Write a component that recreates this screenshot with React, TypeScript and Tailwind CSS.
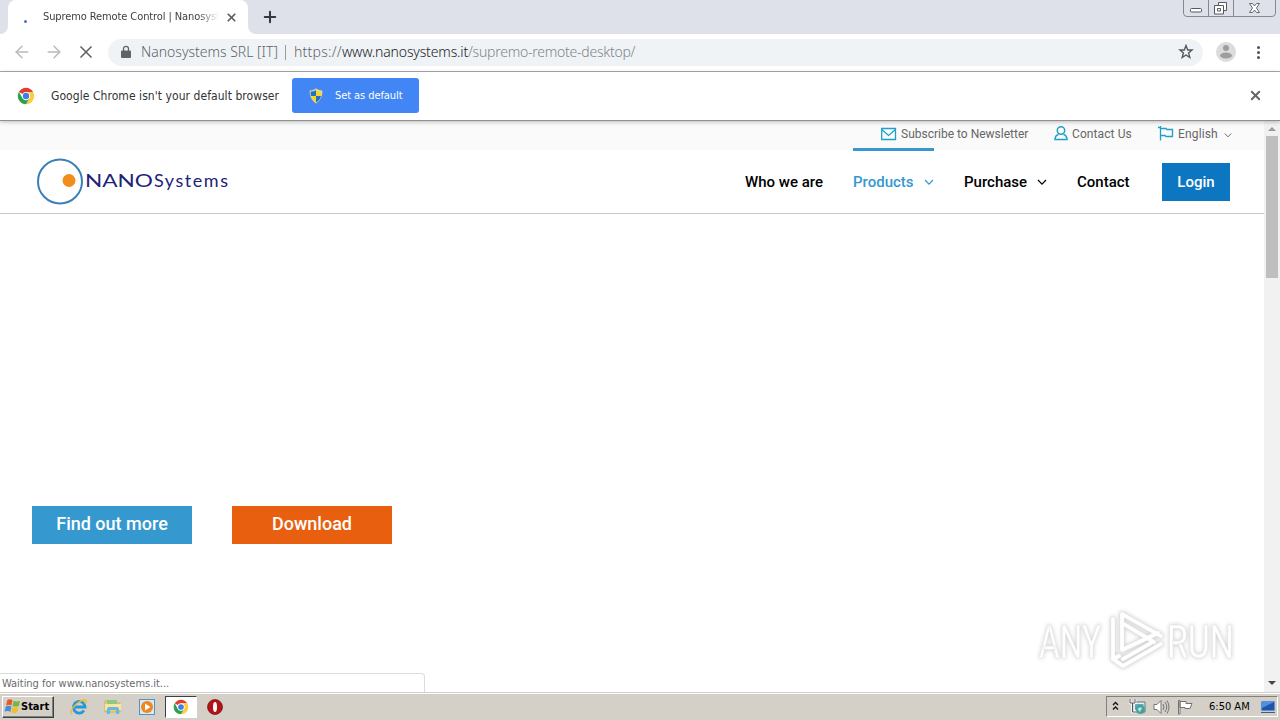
import { ArrowLeft, ArrowRight, Plus, X } from "lucide-react"

const uiFont = "font-['DejaVu_Sans_Condensed','DejaVu_Sans',sans-serif]"

function ChromeLogo({ size }: { size: number }) {
    return (
        <svg width={size} height={size} viewBox="0 0 48 48" className="shrink-0">
            <circle cx="24" cy="24" r="22" fill="#fff" />
            <path d="M24 24 5 13A22 22 0 0 1 43 13H24Z" fill="#e33b2e" />
            <path d="M24 13H43A22 22 0 0 1 24 46L33.5 29.5Z" fill="#fccd3f" />
            <path d="M5 13A22 22 0 0 0 24 46L33.5 29.5 24 35 14.5 29.5Z" fill="#2ba24c" />
            <circle cx="24" cy="24" r="11" fill="#fff" />
            <circle cx="24" cy="24" r="8.5" fill="#3f7de8" />
        </svg>
    )
}

function WindowButtons() {
    return (
        <svg width="94" height="18" viewBox="0 0 94 18" fill="none" className="ml-auto mr-[3px]">
            <path d="M.5 0V13Q.5 16.500 4 16.500H89Q92.500 16.500 92.500 13V0M25.500 0V16M50.500 0V16" stroke="#85888f" />
            <rect x="7.500" y="8.500" width="11" height="3.500" rx="1" fill="#fff" stroke="#55585e" />
            <path d="M35.500 2.500H43.500V10.500H35.500Z" fill="#fff" stroke="#55585e" />
            <path d="M31.500 5.500H40.500V14H31.500Z" fill="#fff" stroke="#55585e" />
            <path d="M34.500 8.500H37.500V11H34.500Z" stroke="#55585e" />
            <path d="M66.500 3.500H69.500L71.500 6 73.500 3.500H76.500L73.500 8 76.500 12.500H73.500L71.500 10 69.500 12.500H66.500L69.500 8Z" fill="#fff" stroke="#666970" />
        </svg>
    )
}

function TabStrip() {
    return (
        <div className="flex h-[34px] bg-[#dee1e9]">
            <div className="h-full w-2 bg-white">
                <div className="h-full rounded-br-lg bg-[#dee1e9]" />
            </div>
            <div className="flex w-60 items-center rounded-t-lg bg-white">
                <div className="ml-4 mt-2 size-[3px] rounded-full bg-[#4a72c8]" />
                <div className="ml-4 w-[176px] overflow-hidden whitespace-nowrap pt-px text-[11px] tracking-[-0.1px] text-[#3c4043] [mask-image:linear-gradient(to_right,black_88%,transparent)]">
                    Supremo Remote Control | Nanosyst
                </div>
                <X size={13} strokeWidth={3.200} className="ml-1.5 text-[#5b5e63]" />
            </div>
            <div className="h-full w-2 bg-white">
                <div className="h-full rounded-bl-lg bg-[#dee1e9]" />
            </div>
            <Plus size={18} strokeWidth={2.700} className="ml-[5px] mt-2 text-[#35383d]" />
            <WindowButtons />
        </div>
    )
}

function Toolbar() {
    return (
        <div className="flex h-[38px] items-center border-b border-[#a9abae] bg-white pb-px">
            <ArrowLeft size={20} strokeWidth={1.800} className="ml-3 text-[#b9bbbe]" />
            <ArrowRight size={20} strokeWidth={1.800} className="ml-3 text-[#b9bbbe]" />
            <X size={20} strokeWidth={2} className="ml-3 text-[#5f6368]" />
            <div className="ml-3 flex h-[27px] w-[1095px] items-center rounded-full bg-[#f0f3f6] font-['Noto_Sans',sans-serif] text-sm font-light text-[#5f6368]">
                <svg width="10" height="14" viewBox="0 0 10 14" className="ml-[13px]">
                    <path d="M2.500 6V3.800a2.500 2.500 0 0 1 5 0V6" fill="none" stroke="#5f6368" strokeWidth="1.300" />
                    <rect x="0" y="5.500" width="10" height="7.500" rx="1" fill="#5f6368" />
                </svg>
                <span className="ml-[10px] w-[137px] whitespace-nowrap">Nanosystems SRL [IT]</span>
                <span className="ml-[7px] h-[15px] w-px bg-[#999ca0]" />
                <span className="ml-2 whitespace-nowrap tracking-[0.25px]">
                    https://<span className="tracking-[-0.16px] text-[#202124]">www.nanosystems.it</span><span className="tracking-[-0.24px] text-[#80848a]">/supremo-remote-desktop/</span>
                </span>
                <svg width="16" height="16" viewBox="0 0 16 16" className="ml-auto mr-[9px]">
                    <path d="M8 1.500 9.700 6H14L10.600 8.900 11.800 13.500 8 11 4.200 13.500 5.400 8.900 2 6H6.300Z" fill="none" stroke="#55595e" strokeWidth="1.400" />
                </svg>
            </div>
            <svg width="20" height="20" viewBox="0 0 20 20" className="ml-[13px]">
                <circle cx="10" cy="10" r="10" fill="#dcdcdc" />
                <circle cx="10" cy="6" r="3" fill="#9d9d9d" />
                <ellipse cx="10" cy="13.500" rx="6" ry="3" fill="#9d9d9d" />
            </svg>
            <div className="ml-[21px] flex flex-col gap-0.5">
                <span className="size-[3px] rounded-full bg-[#505357]" />
                <span className="size-[3px] rounded-full bg-[#505357]" />
                <span className="size-[3px] rounded-full bg-[#505357]" />
            </div>
        </div>
    )
}

function InfoBar() {
    return (
        <div className="z-10 flex h-[49px] shrink-0 items-center border-b border-[#8f8f8f] bg-white pb-px shadow-[0_1px_4px_rgba(0,0,0,0.25)]">
            <div className="ml-[17px]"><ChromeLogo size={18} /></div>
            <div className="ml-4 w-[241px] whitespace-nowrap text-[12px] tracking-[0.06px] text-[#333]">Google Chrome isn't your default browser</div>
            <button className="flex h-[35px] w-[127px] items-center rounded-[3px] bg-[#4285f4] text-[11px] text-white">
                <svg width="14" height="16" viewBox="0 0 14 16" className="ml-[17px]">
                    <path d="M7 .5Q10 2.500 13.300 2.500 13.800 11 7 15.500.2 11 .7 2.500 4 2.500 7 .5Z" fill="#e6e8d8" stroke="#8b98a5" strokeWidth=".6" />
                    <path d="M7 2V8H2Q1.500 6 1.700 3.500 4.500 3.500 7 2ZM7 8H12Q11 12 7 14.500Z" fill="#2472b8" />
                    <path d="M7 2V8H12.200Q12.500 6 12.300 3.500 9.500 3.500 7 2ZM7 8H2Q3 12 7 14.500Z" fill="#f6d52e" />
                </svg>
                <span className="ml-3 whitespace-nowrap pt-px tracking-[-0.08px]">Set as default</span>
            </button>
            <X size={15} strokeWidth={3} className="ml-auto mr-[17px] text-[#626569]" />
        </div>
    )
}

function Chevron({ width }: { width: number }) {
    return (
        <svg width={width} height="7" viewBox="0 0 10 7" fill="none" stroke="currentColor" strokeWidth="1.200">
            <path d="m1 1 4 4.200L9 1" />
        </svg>
    )
}

function TopLinks() {
    return (
        <div className="flex h-[29px] items-start bg-[#fafafa] pt-[5px] text-[12px] leading-[17px] text-[#666]">
            <svg width="16" height="16" viewBox="0 0 16 16" fill="none" stroke="#1ea0ca" strokeWidth="1.300" className="ml-[881px]">
                <path d="M.7 2.500H14.500V13.500H.7ZM.7 3.500 7.600 9.500 14.500 3.500" />
            </svg>
            <span className="ml-1 w-[128px] whitespace-nowrap">Subscribe to Newsletter</span>
            <svg width="14" height="16" viewBox="0 0 14 16" fill="none" stroke="#1ea0ca" strokeWidth="1.500" className="ml-[25px]">
                <circle cx="7" cy="4.500" r="3.700" />
                <path d="M4.500 8.500Q1 9.500 1 13.500H13Q13 9.500 9.500 8.500" />
            </svg>
            <span className="ml-1 w-[60px] whitespace-nowrap tracking-[0.1px]">Contact Us</span>
            <svg width="17" height="16" viewBox="0 0 17 16" fill="none" stroke="#1ea0ca" strokeWidth="1.300" className="ml-[26px]">
                <path d="M2.500 0V14.500M0 1.500H3M2.500 2.500H8L9 3.500H14.500V10.500H8L7 9.500H2.500" />
            </svg>
            <span className="ml-[3px] w-[41px] whitespace-nowrap tracking-[0.15px]">English</span>
            <span className="ml-[5px] mt-1.5"><Chevron width={8} /></span>
        </div>
    )
}

function SiteHeader() {
    return (
        <header className="font-[Roboto,sans-serif]">
            <TopLinks />
            <div className="flex h-16 items-start border-b border-[#c8c8c8] bg-white">
                <svg width="200" height="50" viewBox="0 0 200 50" className="ml-[32px] mt-[6px]">
                    <circle cx="28" cy="25.500" r="22" fill="none" stroke="#3980ba" strokeWidth="2" />
                    <circle cx="37" cy="24.500" r="6.500" fill="#f18d19" />
                    <text x="53" y="30.500" textLength="68" lengthAdjust="spacingAndGlyphs" fontFamily="Lato" fontSize="17.500" fill="#202377">NANO</text>
                    <text x="122" y="30.500" textLength="74" fontFamily="Lato" fontSize="18" fill="#202377">Systems</text>
                </svg>
                <nav className="ml-auto flex h-full pr-[34px] text-[15px] font-medium leading-[22px] text-black">
                    <a className="mt-[21px] w-[79px] whitespace-nowrap">Who we are</a>
                    <a className="ml-[29px] flex w-[81px] items-center self-start border-t-3 border-[#3598cf] pb-[19px] pt-5 -mt-0.5 text-[#3598cf]">
                        <span className="w-[71px] whitespace-nowrap">Products</span>
                        <Chevron width={10} />
                    </a>
                    <a className="ml-[30px] mt-[21px] flex h-[22px] w-[83px] items-center">
                        <span className="w-[73px] whitespace-nowrap">Purchase</span>
                        <Chevron width={10} />
                    </a>
                    <a className="ml-[30px] mt-[21px] w-[54px] whitespace-nowrap">Contact</a>
                    <a className="ml-[31px] mt-[13px] h-[38px] w-[68px] bg-[#0c76c0] pt-2 text-center text-white">Login</a>
                </nav>
            </div>
        </header>
    )
}

function Watermark() {
    return (
        <svg width="216" height="76" viewBox="0 0 216 76" className="absolute right-[29px] top-[483px] drop-shadow-[0_0_2px_rgba(0,0,0,0.22)]">
            <g fill="#fff" stroke="#e5e5e5" strokeWidth=".5" fontFamily="Roboto" fontSize="47">
                <text x="4" y="54" textLength="62" lengthAdjust="spacingAndGlyphs">ANY</text>
                <text x="132" y="54" textLength="67" lengthAdjust="spacingAndGlyphs">RUN</text>
            </g>
            <g fill="none" strokeLinejoin="round" strokeLinecap="round">
                <path d="M87 10V46L123 29M87 10 126 32M87 19 119 38M78 15V55L84 52M78 55 88 62 126 40M88 55 116 39" stroke="#e4e4e4" strokeWidth="5" />
                <path d="M87 10V46L123 29M87 10 126 32M87 19 119 38M78 15V55L84 52M78 55 88 62 126 40M88 55 116 39" stroke="#fff" strokeWidth="3.700" />
            </g>
        </svg>
    )
}

function Scrollbar() {
    return (
        <div className="flex w-4 flex-col items-center bg-[#f1f1f1]">
            <svg width="16" height="15" viewBox="0 0 16 15"><path d="M4 10H12L8 6Z" fill="#9a9a9a" /></svg>
            <div className="h-[142px] w-3 bg-[#bfbfbf]" />
            <svg width="16" height="16" viewBox="0 0 16 16" className="mt-auto"><path d="M4 5H12L8 9Z" fill="#454545" /></svg>
        </div>
    )
}

function Page() {
    return (
        <div className="relative flex h-[571px] bg-white">
            <main className="flex w-[1264px] flex-col">
                <SiteHeader />
                <div className="ml-8 mt-[292px] flex gap-10 text-center font-[Roboto,sans-serif] text-lg font-medium leading-9 text-white">
                    <button className="h-[38px] w-40 bg-[#3598cf] pb-0.5">Find out more</button>
                    <button className="h-[38px] w-40 bg-[#e85f10] pb-0.5">Download</button>
                </div>
                <div className="mt-auto h-[19px] w-[425px] whitespace-nowrap rounded-tr border-r border-t border-[#dcdcdc] pl-[2px] text-[11px] leading-[19px] tracking-[-0.03px] text-[#6b6b6b]">
                    Waiting for www.nanosystems.it...
                </div>
            </main>
            <Scrollbar />
            <Watermark />
        </div>
    )
}

function QuickLaunch() {
    return (
        <div className="flex items-center">
            <svg width="18" height="18" viewBox="0 0 18 18" className="ml-4">
                <path d="M14 12.500A5.800 5.800 0 1 1 15 9H5" fill="none" stroke="#2498dc" strokeWidth="2.800" />
                <path d="M2 16Q-1 13 6 6.500 14 0 16 2.500 17 4 15 6" fill="none" stroke="#edbc36" strokeWidth="1.400" />
            </svg>
            <svg width="18" height="18" viewBox="0 0 18 18" className="ml-4">
                <path d="M1 3H7L8 5H16V14H1Z" fill="#f1ce6b" stroke="#c89b38" strokeWidth=".6" />
                <path d="M3 2H13V9H3Z" fill="#8ec883" />
                <path d="M1 6H17V12H1Z" fill="#fae69a" />
                <path d="M3 16V11Q3 9 5 9H13Q15 9 15 11V16H12V12H6V16Z" fill="#63b9e8" />
            </svg>
            <svg width="18" height="18" viewBox="0 0 18 18" className="ml-4">
                <rect x="1.500" y="1.500" width="15" height="15" fill="#d6e9f7" stroke="#5793c2" />
                <circle cx="9" cy="9" r="6" fill="#ef861e" />
                <path d="M7 5.500 12.500 9 7 12.500Z" fill="#fff" />
            </svg>
            <div className="ml-[9px] flex h-[22px] w-8 items-center justify-center border border-b-white border-l-[#404040] border-r-white border-t-[#404040] bg-white">
                <ChromeLogo size={16} />
            </div>
            <svg width="16" height="16" viewBox="0 0 16 16" className="ml-[10px]">
                <circle cx="8" cy="8" r="7.500" fill="#b31217" stroke="#7c0d10" strokeWidth=".7" />
                <ellipse cx="8" cy="8" rx="2" ry="5" fill="#fff" />
            </svg>
        </div>
    )
}

function Tray() {
    return (
        <div className="ml-auto mr-0.5 flex h-[21px] w-[172px] items-center border border-b-white border-l-[#808080] border-r-white border-t-[#808080]">
            <svg width="7" height="10" viewBox="0 0 7 10" fill="none" stroke="#111" strokeWidth="1.300" className="-mt-0.5 ml-[5px]">
                <path d="m1 4 2.500-2.500L6 4M1 8.500 3.500 6 6 8.500" />
            </svg>
            <svg width="17" height="17" viewBox="0 0 17 17" className="ml-[10px]">
                <path d="M4.500 4H16V14H4.500Z" fill="#e8eeee" stroke="#65757a" />
                <path d="M6 6H14.500V12H6Z" fill="#5cabb7" />
                <circle cx="11.500" cy="11.500" r="4.500" fill="#469f9e" />
                <path d="M8.500 11Q11 8 13 10L11 14Z" fill="#b9e5db" />
                <path d="M1 1V5H6V1M3.500 5V14H7" fill="none" stroke="#fff" strokeWidth="2.500" />
                <path d="M1 1V5H6V1M3.500 5V14H7" fill="none" stroke="#555" strokeWidth="1" />
            </svg>
            <svg width="17" height="16" viewBox="0 0 17 16" fill="none" stroke="#747474" className="ml-[7px]">
                <path d="M1 5.500H4L8 1.500V14.500L4 10.500H1Z" fill="#fff" />
                <path d="M10 5Q12 8 10 11M12 3Q15.500 8 12 13M14 1.500Q18 8 14 14.500" />
            </svg>
            <svg width="16" height="16" viewBox="0 0 16 16" className="ml-[7px]">
                <path d="M1.500 1.500H3V15H1.500ZM3 2.500H9V4.500H15L13 9.500H8V8.500H3Z" fill="#fff" stroke="#707070" />
            </svg>
            <span className="ml-4 w-[41px] whitespace-nowrap pt-0.5 text-[11px] text-black">6:50 AM</span>
            <svg width="16" height="14" viewBox="0 0 16 14" className="ml-auto mr-px">
                <path d="M1 1H15V11H1Z" fill="#1d55ad" stroke="#b7c8dc" />
                <path d="M2 2H14L2 8Z" fill="#4f91dc" />
                <path d="M1 12.500H15" stroke="#435d7b" />
            </svg>
        </div>
    )
}

function Taskbar() {
    return (
        <div className="flex h-7 items-center border-t border-[#d4d0c8] bg-[#d4d0c8] shadow-[inset_0_1px_0_#fff]">
            <button className="ml-0.5 flex h-[22px] w-[52px] items-center border border-b-[#404040] border-l-white border-r-[#404040] border-t-white text-[11px] font-bold text-black shadow-[inset_-1px_-1px_0_#808080]">
                <svg width="17" height="17" viewBox="0 0 16 16" className="ml-px shrink-0">
                    <path d="M3 2Q5.500.5 8 2L7 7Q4.500 5.500 2 7Z" fill="#e95925" />
                    <path d="M9 2.500Q12 4 15 2.500L14 7.500Q11 9 8 7.500Z" fill="#78b642" />
                    <path d="M1.700 8Q4.500 6.500 7 8L6 13Q3 11.500.5 13Z" fill="#448ed5" />
                    <path d="M7.800 8.500Q11 10 13.700 8.500L12.500 13.500Q9.500 15 6.800 13.500Z" fill="#f5bd29" />
                </svg>
                <span className="pt-0.5">Start</span>
            </button>
            <QuickLaunch />
            <Tray />
        </div>
    )
}

export default function App() {
    return (
        <div className={`${uiFont} flex h-[720px] w-[1280px] flex-col overflow-hidden bg-white`}>
            <TabStrip />
            <Toolbar />
            <InfoBar />
            <Page />
            <Taskbar />
        </div>
    )
}
